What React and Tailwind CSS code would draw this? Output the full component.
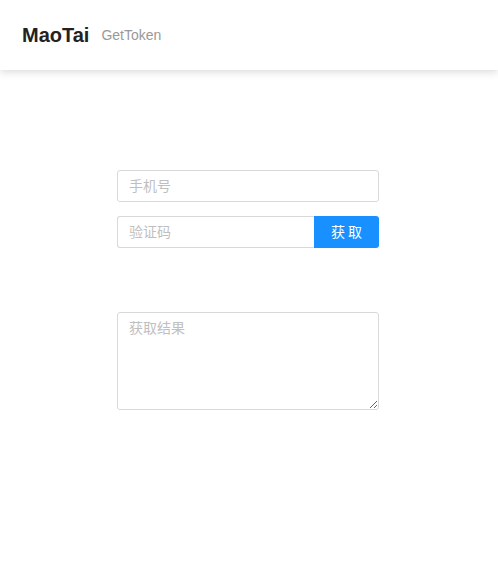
import React from "react";

export default function App() {
  return (
    <div className="min-h-[579px] bg-white" style={{ fontFamily: '"Liberation Sans", "Noto Sans CJK SC", sans-serif' }}>
      <header className="h-[70px] flex items-center px-[22px] bg-white shadow-[0_2px_8px_rgba(0,0,0,0.15)]">
        <span className="text-[20px] font-bold text-[#222]">MaoTai</span>
        <span className="ml-[12px] text-[14px] text-[#999] mt-[1px]">GetToken</span>
      </header>
      <main className="flex flex-col items-center pt-[100px]">
        <div className="w-[262px] mr-[2px] flex flex-col">
          <input
            placeholder="手机号"
            className="h-[32px] w-full border border-[#d9d9d9] rounded-[3px] px-[11px] text-[14px] text-[#333] placeholder:text-[#bfbfbf] outline-none"
          />
          <div className="mt-[14px] flex h-[32px]">
            <input
              placeholder="验证码"
              className="flex-1 min-w-0 h-full border border-[#d9d9d9] border-r-0 rounded-l-[3px] px-[11px] text-[14px] text-[#333] placeholder:text-[#bfbfbf] outline-none"
            />
            <button className="w-[65px] h-full bg-[#1890ff] text-white text-[14px] rounded-r-[3px] tracking-[3px] pl-[3px]">
              获取
            </button>
          </div>
          <textarea
            placeholder="获取结果"
            className="mt-[64px] h-[98px] w-full border border-[#d9d9d9] rounded-[3px] px-[11px] py-[5px] text-[14px] text-[#333] placeholder:text-[#bfbfbf] outline-none"
          />
        </div>
      </main>
    </div>
  );
}
